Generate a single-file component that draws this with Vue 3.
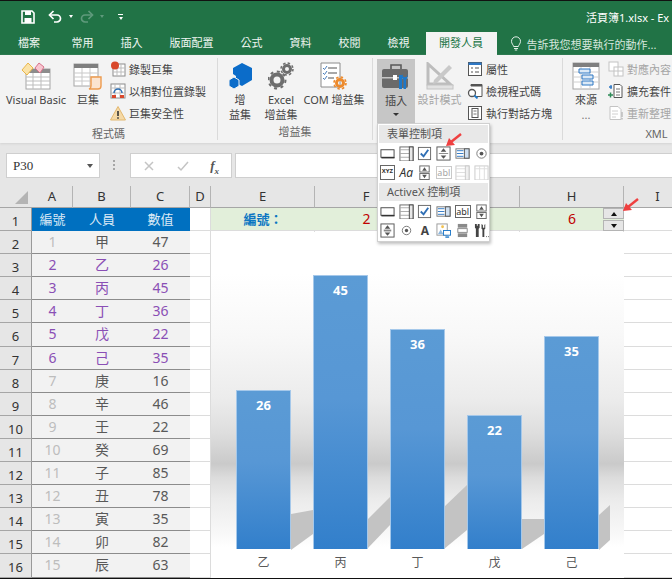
<script setup>
const tabs = ['常用', '插入', '版面配置', '公式', '資料', '校閱', '檢視']
const cols = ['A', 'B', 'C', 'D', 'E', 'F', 'G', 'H', 'I']
const rows = [
  [1, '甲', 47], [2, '乙', 26], [3, '丙', 45], [4, '丁', 36], [5, '戊', 22],
  [6, '己', 35], [7, '庚', 16], [8, '辛', 46], [9, '壬', 22], [10, '癸', 69],
  [11, '子', 85], [12, '丑', 78], [13, '寅', 35], [14, '卯', 82], [15, '辰', 63]
]
const bars = [
  { name: '乙', value: 26 },
  { name: '丙', value: 45 },
  { name: '丁', value: 36 },
  { name: '戊', value: 22 },
  { name: '己', value: 35 }
]
const isPicked = (n) => n >= 2 && n <= 6
const shadows = [
  '80,282 102,278 102,302 80,318',
  '156,288 179,265 179,293 156,317',
  '233,275 256,253 256,298 233,317',
  '311,287 333,287 333,302 311,317',
  '388,283 399,273 399,308 388,318'
]
</script>

<template>
  <div class="app">
    <!-- Title bar -->
    <div class="titlebar">
      <svg class="qa-save" viewBox="0 0 14 14" width="14" height="14">
        <path d="M1 1h10l2 2v10H1z" fill="none" stroke="#fff" stroke-width="1.6" />
        <rect x="4" y="1" width="6" height="4" fill="#fff" />
        <rect x="3.5" y="8" width="7" height="5" fill="#fff" />
      </svg>
      <svg class="qa-undo" viewBox="0 0 14 14" width="14" height="14">
        <path d="M2 5h7a3.5 3.5 0 0 1 0 7H6" fill="none" stroke="#fff" stroke-width="1.7" />
        <path d="M5.5 1 1.5 5l4 4" fill="none" stroke="#fff" stroke-width="1.7" />
      </svg>
      <span class="qa-caret"></span>
      <svg class="qa-redo" viewBox="0 0 14 14" width="14" height="14">
        <path d="M12 5H5a3.5 3.5 0 0 0 0 7h3" fill="none" stroke="#5f9a7c" stroke-width="1.7" />
        <path d="M8.5 1l4 4-4 4" fill="none" stroke="#5f9a7c" stroke-width="1.7" />
      </svg>
      <span class="qa-caret qa-caret--dim"></span>
      <span class="qa-custom"><i></i></span>
      <div class="title">活頁簿1.xlsx - Ex</div>
    </div>

    <!-- Tabs -->
    <div class="tabs">
      <div class="tab tab--file">檔案</div>
      <div v-for="t in tabs" :key="t" class="tab">{{ t }}</div>
      <div class="tab tab--active">開發人員</div>
      <div class="tell">
        <svg viewBox="0 0 12 15" width="12" height="15">
          <path d="M3.6 10.5C3.4 8.8 1.5 7.8 1.5 5.3a4.5 4.5 0 0 1 9 0c0 2.500-1.900 3.500-2.100 5.200z" fill="none" stroke="#e4efe9" />
          <path d="M4 12.500h4M4.800 14h2.400" stroke="#e4efe9" />
        </svg>
        <span>告訴我您想要執行的動作...</span>
      </div>
    </div>

    <!-- Ribbon -->
    <div class="ribbon">
      <section class="group group--code">
        <div class="group-body">
          <div class="big big--vb">
            <svg class="big-icon" viewBox="0 0 30 28" width="30" height="28">
              <rect x="5" y="7" width="24" height="20" fill="#fff" stroke="#a6a6a6" />
              <rect x="5" y="7" width="24" height="4" fill="#8c8c8c" />
              <path d="M5 15h24M5 19h24M5 23h24M12 11v16M20 11v16" stroke="#bdbdbd" />
              <path d="M1 8l6-7 5 5-6 7z" fill="#fbe3a8" stroke="#e9b64a" />
              <path d="M14 6l4-5 5 4-4 6z" fill="#f7c6d0" stroke="#d9718a" />
            </svg>
            <span>Visual Basic</span>
          </div>
          <div class="big big--macro">
            <svg class="big-icon" viewBox="0 0 30 28" width="30" height="28">
              <rect x="1" y="2" width="24" height="22" fill="#fff" stroke="#a6a6a6" />
              <rect x="1" y="2" width="24" height="4" fill="#7f7f7f" />
              <path d="M1 11h24M1 15h24M1 19h24M9 6v18M17 6v18" stroke="#c9c9c9" />
              <path d="M18 15h10v9a3 3 0 0 1-3 3H16a3 3 0 0 0 2-3z" fill="#fbe4d0" stroke="#ed9b4e" stroke-width="1.400" />
            </svg>
            <span>巨集</span>
          </div>
          <div class="small-col small-col--code">
            <div class="small">
              <svg viewBox="0 0 16 16" width="16" height="16">
                <rect x="3" y="3" width="12" height="12" fill="#fff" stroke="#8c8c8c" />
                <path d="M3 7h12M3 11h12M7 3v12M11 3v12" stroke="#bdbdbd" />
                <circle cx="5" cy="4.500" r="4" fill="#d9482b" />
              </svg>
              <span>錄製巨集</span>
            </div>
            <div class="small">
              <svg viewBox="0 0 16 16" width="16" height="16">
                <rect x="1" y="1" width="14" height="14" fill="#fff" stroke="#8c8c8c" />
                <path d="M1 5h14M1 10h14M5 1v14M10 1v14" stroke="#bdbdbd" />
                <path d="M4 10a4 4 0 0 1 8 0" fill="none" stroke="#2b6cb0" stroke-width="1.500" />
                <rect x="2" y="12" width="4" height="3" fill="#d9482b" />
                <rect x="10" y="12" width="4" height="3" fill="#d9482b" />
              </svg>
              <span>以相對位置錄製</span>
            </div>
            <div class="small">
              <svg viewBox="0 0 16 16" width="16" height="16">
                <path d="M8 1.500 15.500 15H.5z" fill="#f5d9a6" stroke="#e2b870" />
                <path d="M8 6v5M8 12.200v1.600" stroke="#333" stroke-width="1.600" />
              </svg>
              <span>巨集安全性</span>
            </div>
          </div>
        </div>
        <div class="group-label">程式碼</div>
      </section>

      <section class="group group--addin">
        <div class="group-body">
          <div class="big big--store">
            <svg class="big-icon" viewBox="0 0 26 28" width="26" height="28">
              <path d="M14 1l10 5v12l-10 6-6-3v-7l-3-2V6z" fill="#0b6cc9" />
              <path d="M6 15l5 3v6l-5 3-5-3v-6z" fill="#0b6cc9" stroke="#f3f3f3" />
            </svg>
            <span>增<br />益集</span>
          </div>
          <div class="big big--excel">
            <svg class="big-icon" viewBox="0 0 26 28" width="26" height="28">
              <circle cx="9" cy="18" r="5.500" fill="none" stroke="#6e6e6e" stroke-width="4" />
              <circle cx="9" cy="18" r="8.500" fill="none" stroke="#6e6e6e" stroke-width="2" stroke-dasharray="3 3.600" />
              <circle cx="19" cy="7" r="3.500" fill="none" stroke="#6e6e6e" stroke-width="3" />
              <circle cx="19" cy="7" r="6" fill="none" stroke="#6e6e6e" stroke-width="1.500" stroke-dasharray="2.500 2.200" />
            </svg>
            <span>Excel<br />增益集</span>
          </div>
          <div class="big big--com">
            <svg class="big-icon" viewBox="0 0 30 28" width="30" height="28">
              <path d="M2 1h19v24H2z" fill="#fff" stroke="#8c8c8c" />
              <path d="M9 6h9M9 11h9M9 16h6" stroke="#8c8c8c" stroke-width="1.400" />
              <path d="M4 6l1.500 1.500L8 4M4 11l1.500 1.500L8 9M4 16l1.500 1.500L8 14" fill="none" stroke="#4a7ebb" />
              <circle cx="21" cy="21" r="3.500" fill="none" stroke="#ed8a2c" stroke-width="3" />
              <circle cx="21" cy="21" r="6" fill="none" stroke="#ed8a2c" stroke-width="1.600" stroke-dasharray="2.500 2.200" />
            </svg>
            <span>COM 增益集</span>
          </div>
        </div>
        <div class="group-label">增益集</div>
      </section>

      <section class="group group--controls">
        <div class="group-body">
          <div class="big big--insert">
            <svg class="big-icon" viewBox="0 0 30 28" width="30" height="28">
              <path d="M10 6V2h10v4" fill="none" stroke="#5a5a5a" stroke-width="1.600" />
              <rect x="1" y="6" width="26" height="19" rx="2" fill="#6a6a6a" />
              <rect x="1" y="14" width="26" height="1.500" fill="#c6c6c6" />
              <rect x="12" y="12" width="4" height="5" fill="#fff" />
              <path d="M21 11v4l1.500 2v9h2.500v-9l1.500-2v-4l-1 3h-3z" fill="#1e78c8" />
              <path d="M18 12h3v14h-3z" fill="#1e78c8" />
            </svg>
            <span>插入</span>
            <i class="insert-caret"></i>
          </div>
          <div class="big big--design">
            <svg class="big-icon" viewBox="0 0 30 28" width="30" height="28">
              <path d="M3 2v20h22z" fill="none" stroke="#bdbdbd" stroke-width="3" />
              <path d="M9 18 24 3l3 3-15 15-4 1z" fill="#c9c9c9" />
              <rect x="2" y="23" width="26" height="4" fill="#e2e2e2" stroke="#c4c4c4" />
            </svg>
            <span>設計模式</span>
          </div>
          <div class="small-col small-col--controls">
            <div class="small">
              <svg viewBox="0 0 16 16" width="16" height="16">
                <rect x="1.500" y="1.500" width="13" height="13" fill="#fff" stroke="#555" />
                <rect x="1.500" y="1.500" width="13" height="2.500" fill="#2f78c4" />
                <path d="M4 7h2M8 7h4M4 11h2M8 11h4" stroke="#555" stroke-width="1.200" />
              </svg>
              <span>屬性</span>
            </div>
            <div class="small">
              <svg viewBox="0 0 16 16" width="16" height="16">
                <path d="M4 3V1.500h11v12H9" fill="#fff" stroke="#555" />
                <rect x="4" y="1.500" width="11" height="2" fill="#555" />
                <circle cx="5" cy="10" r="3.500" fill="#fff" stroke="#555" stroke-width="1.300" />
                <path d="M7.500 12.500 10.500 15.500" stroke="#1e78c8" stroke-width="1.800" />
              </svg>
              <span>檢視程式碼</span>
            </div>
            <div class="small">
              <svg viewBox="0 0 16 16" width="16" height="16">
                <rect x="1.500" y="1.500" width="13" height="13" fill="#fff" stroke="#555" />
                <rect x="5" y="3.500" width="6" height="9" fill="none" stroke="#555" />
                <path d="M6.500 6h3M6.500 9h3" stroke="#777" />
              </svg>
              <span>執行對話方塊</span>
            </div>
          </div>
        </div>
        <div class="group-label"></div>
      </section>

      <section class="group group--xml">
        <div class="group-body">
          <div class="big big--source">
            <svg class="big-icon" viewBox="0 0 28 28" width="28" height="28">
              <rect x="1" y="1" width="26" height="26" fill="#fff" stroke="#a6a6a6" />
              <rect x="1" y="1" width="26" height="4" fill="#7f7f7f" />
              <path d="M1 10h26M1 15h26M1 20h26M9 5v22M18 5v22" stroke="#d0d0d0" />
              <path d="M7 7h11v4H7zM10 13h11v4H10zM10 19h11v4H10z" fill="#dbe9f6" stroke="#2f78c4" />
            </svg>
            <span>來源</span>
            <span class="more">...</span>
          </div>
          <div class="small-col small-col--xml">
            <div class="small small--off">
              <svg viewBox="0 0 16 16" width="16" height="16">
                <rect x="1" y="1" width="9" height="9" fill="#fff" stroke="#c4c4c4" />
                <rect x="6" y="6" width="9" height="9" fill="#fff" stroke="#c4c4c4" />
                <path d="M6 10h9M10 6v9" stroke="#c4c4c4" />
              </svg>
              <span>對應內容</span>
            </div>
            <div class="small">
              <svg viewBox="0 0 16 16" width="16" height="16">
                <path d="M6 1.500h6l2 2v11H6z" fill="#fff" stroke="#555" />
                <path d="M8 6h4M8 9h4M8 12h4" stroke="#777" />
                <path d="M1 4h3M3 2v4" stroke="#2f78c4" stroke-width="1.300" />
                <path d="M0 12h5M2.500 9.500v5" stroke="#2e8b57" stroke-width="1.500" />
              </svg>
              <span>擴充套件</span>
            </div>
            <div class="small small--off">
              <svg viewBox="0 0 16 16" width="16" height="16">
                <path d="M2 1.500h8l3 3v10H2z" fill="#fff" stroke="#c4c4c4" />
                <path d="M4 6h6M4 9h6M4 12h4" stroke="#d0d0d0" />
                <path d="M14 7v5M14 13v1.500" stroke="#bdbdbd" stroke-width="1.500" />
              </svg>
              <span>重新整理</span>
            </div>
          </div>
        </div>
        <div class="group-label group-label--xml">XML</div>
      </section>
    </div>

    <!-- Formula bar -->
    <div class="formula">
      <div class="namebox">
        <span>P30</span>
        <i class="namebox-caret"></i>
      </div>
      <div class="grip"></div>
      <div class="fx-box">
        <svg viewBox="0 0 12 12" width="12" height="12"><path d="M2 2l8 8M10 2l-8 8" stroke="#c4c4c4" stroke-width="1.500" /></svg>
        <svg viewBox="0 0 12 12" width="12" height="12"><path d="M1 7l3 3 7-8" fill="none" stroke="#c4c4c4" stroke-width="1.500" /></svg>
        <span class="fx">f<sub>x</sub></span>
      </div>
      <div class="fx-input"></div>
    </div>

    <!-- Sheet -->
    <div class="sheet">
      <div class="corner"><i></i></div>
      <div v-for="c in cols" :key="c" class="col-head">{{ c }}</div>

      <div class="row-num">1</div>
      <div class="cell cell--head">編號</div>
      <div class="cell cell--head">人員</div>
      <div class="cell cell--head">數值</div>
      <div class="cell"></div>
      <div class="cell cell--band cell--caption">編號：</div>
      <div class="cell cell--band cell--num">2</div>
      <div class="cell cell--band"></div>
      <div class="cell cell--band cell--num">6</div>
      <div class="cell"></div>

      <template v-for="r in rows" :key="r[0]">
        <div class="row-num">{{ r[0] + 1 }}</div>
        <div :class="['cell', 'cell--data', isPicked(r[0]) ? 'is-picked' : 'is-faded']">{{ r[0] }}</div>
        <div :class="['cell', 'cell--data', { 'is-picked': isPicked(r[0]) }]">{{ r[1] }}</div>
        <div :class="['cell', 'cell--data', { 'is-picked': isPicked(r[0]) }]">{{ r[2] }}</div>
        <div v-for="n in 6" :key="n" class="cell"></div>
      </template>

      <!-- Spin button over H1 -->
      <div class="spin">
        <div class="spin-btn"><i class="tri tri--up"></i></div>
        <div class="spin-btn"><i class="tri tri--down"></i></div>
      </div>

      <!-- Chart floats over the cells -->
      <div class="chart">
        <svg class="chart-shadow" viewBox="0 0 413 346" width="413" height="346">
          <polygon v-for="p in shadows" :key="p" :points="p" fill="#c3c3c3" />
        </svg>
        <div class="bars">
          <div v-for="b in bars" :key="b.name" class="bar" :style="{ height: b.value * 6.1 + 'px' }">
            {{ b.value }}
          </div>
        </div>
        <div class="axis">
          <span v-for="b in bars" :key="b.name">{{ b.name }}</span>
        </div>
      </div>
    </div>

    <!-- Insert dropdown -->
    <div class="menu">
      <div class="menu-title">表單控制項</div>
      <div class="ctrl-grid">
        <svg viewBox="0 0 16 16"><rect x="1" y="4" width="14" height="8" fill="#fff" stroke="#444" /><path d="M1.500 12.500h14" stroke="#333" stroke-width="1.500" /></svg>
        <svg viewBox="0 0 16 16"><rect x="1" y="1" width="14" height="15" fill="#fff" stroke="#666" /><path d="M1 4h10M1 8h10M1 12h10" stroke="#aaa" /><rect x="11" y="1" width="4" height="15" fill="#e8e8e8" stroke="#444" /></svg>
        <svg viewBox="0 0 16 16"><rect x="1.500" y="1.500" width="13" height="13" fill="#fff" stroke="#666" /><path d="M4 8l3 3 5-7" fill="none" stroke="#2f6fb5" stroke-width="2" /></svg>
        <svg viewBox="0 0 16 16"><rect x="1" y="1" width="14" height="14" fill="#fff" stroke="#555" /><path d="M8 2.500 11 6H5zM8 13.500 5 10h6z" fill="#555" /><path d="M3 8h10" stroke="#888" /></svg>
        <svg viewBox="0 0 16 16"><rect x="1" y="3" width="14" height="10" fill="#fff" stroke="#777" /><path d="M2 5h7M2 8h7M2 11h7" stroke="#2f78c4" /><rect x="10" y="3" width="5" height="10" fill="#cfe0f2" stroke="#555" /></svg>
        <svg viewBox="0 0 16 16"><circle cx="8" cy="8" r="5" fill="#fff" stroke="#777" /><circle cx="8" cy="8" r="2" fill="#555" /></svg>

        <div class="ctrl-box"><b>XYZ</b></div>
        <span class="ctrl-aa">Aa</span>
        <svg viewBox="0 0 16 16"><rect x="3" y="1" width="10" height="6.500" fill="#fff" stroke="#666" /><rect x="3" y="9" width="10" height="6.500" fill="#fff" stroke="#666" /><path d="M8 2.500 10.500 6h-5zM8 14 5.500 10.500h5z" fill="#555" /></svg>
        <div class="ctrl-abl ctrl-abl--off">abl</div>
        <svg viewBox="0 0 16 16"><rect x="1" y="1" width="14" height="15" fill="#fff" stroke="#c9c9c9" /><path d="M1 4h10M1 8h10M1 12h10" stroke="#ddd" /><rect x="11" y="1" width="4" height="15" fill="#f0f0f0" stroke="#c9c9c9" /></svg>
        <svg viewBox="0 0 16 16"><rect x="1" y="1" width="14" height="15" fill="#fff" stroke="#c9c9c9" /><path d="M1 4h14M6 1v15M11 1v15" stroke="#ddd" /></svg>
      </div>
      <div class="menu-title">ActiveX 控制項</div>
      <div class="ctrl-grid">
        <svg viewBox="0 0 16 16"><rect x="1" y="4" width="14" height="8" fill="#fff" stroke="#444" /><path d="M1.500 12.500h14" stroke="#333" stroke-width="1.500" /></svg>
        <svg viewBox="0 0 16 16"><rect x="1" y="1" width="14" height="15" fill="#fff" stroke="#666" /><path d="M1 4h10M1 8h10M1 12h10" stroke="#aaa" /><rect x="11" y="1" width="4" height="15" fill="#e8e8e8" stroke="#444" /></svg>
        <svg viewBox="0 0 16 16"><rect x="1.500" y="1.500" width="13" height="13" fill="#fff" stroke="#666" /><path d="M4 8l3 3 5-7" fill="none" stroke="#2f6fb5" stroke-width="2" /></svg>
        <svg viewBox="0 0 16 16"><rect x="1" y="3" width="14" height="10" fill="#fff" stroke="#777" /><path d="M2 5h7M2 8h7M2 11h7" stroke="#2f78c4" /><rect x="10" y="3" width="5" height="10" fill="#cfe0f2" stroke="#555" /></svg>
        <div class="ctrl-abl">abl</div>
        <svg viewBox="0 0 16 16"><rect x="3" y="1" width="10" height="6.500" fill="#fff" stroke="#666" /><rect x="3" y="9" width="10" height="6.500" fill="#fff" stroke="#666" /><path d="M8 2.500 10.500 6h-5zM8 14 5.500 10.500h5z" fill="#555" /></svg>

        <svg viewBox="0 0 16 16"><rect x="1" y="1" width="14" height="14" fill="#fff" stroke="#555" /><path d="M8 2.500 11 6H5zM8 13.500 5 10h6z" fill="#555" /><rect x="4" y="7" width="8" height="2" fill="#888" /></svg>
        <svg viewBox="0 0 16 16"><circle cx="8" cy="8" r="4.500" fill="#fff" stroke="#777" /><circle cx="8" cy="8" r="1.800" fill="#555" /></svg>
        <span class="ctrl-a">A</span>
        <svg viewBox="0 0 16 16"><rect x="1" y="1" width="11" height="12" fill="#fff" stroke="#999" /><circle cx="7" cy="4" r="1.500" fill="#f2c14e" /><path d="M2 12l3-5 3 5z" fill="#8fb8de" /><rect x="8" y="8" width="7.500" height="5" fill="#fff" stroke="#1e78c8" /><path d="M10 15h4" stroke="#1e78c8" stroke-width="1.500" /></svg>
        <svg viewBox="0 0 16 16"><rect x="3" y="1" width="10" height="4" fill="#8a8a8a" /><rect x="3" y="6" width="10" height="4" fill="#fff" stroke="#888" /><rect x="3" y="11" width="10" height="4" fill="#8a8a8a" /></svg>
        <svg viewBox="0 0 16 16"><path d="M1 1h2v2h1V1h2v4l-1 1v9H2V6L1 5z" fill="#444" /><path d="M8 1l1.500 1v3H11V2l1-1v5l-1 1v8H9V7L8 6z" fill="#444" /><path d="M13 14.500h.8M15 14.500h.8" stroke="#444" /></svg>
      </div>
    </div>

    <!-- Callout arrows -->
    <svg class="callout callout--menu" viewBox="0 0 18 16" width="18" height="16">
      <path d="M16 1 6 9" stroke="#ef4040" stroke-width="2.500" />
      <path d="M1 13 4 5l6 7z" fill="#ef4040" />
    </svg>
    <svg class="callout callout--spin" viewBox="0 0 18 16" width="18" height="16">
      <path d="M16 1 6 9" stroke="#ef4040" stroke-width="2.500" />
      <path d="M1 13 4 5l6 7z" fill="#ef4040" />
    </svg>
  </div>
</template>

<style>
html,
body {
  margin: 0;
  background: #fff;
}
</style>

<style scoped>
.app {
  position: relative;
  width: 672px;
  height: 579px;
  overflow: hidden;
  box-sizing: border-box;
  border-top: 1px solid #111;
  border-bottom: 1px solid #111;
  background: #e6e6e6;
  color: #444;
  font-family: "Noto Sans", "Noto Sans CJK TC", sans-serif;
  font-size: 11px;
}

/* title bar */
.titlebar {
  display: flex;
  align-items: center;
  height: 31px;
  padding-left: 21px;
  background: #217346;
  color: #fff;
}
.qa-undo { margin-left: 13px; }
.qa-caret {
  width: 0;
  height: 0;
  margin-left: 7px;
  border: 2.500px solid transparent;
  border-top: 3px solid #fff;
  border-bottom: 0;
}
.qa-redo { margin-left: 7px; }
.qa-caret--dim { margin-left: 6px; border-top-color: #5f9a7c; }
.qa-custom {
  display: flex;
  flex-direction: column;
  align-items: center;
  width: 5px;
  margin-left: 14px;
  padding-top: 2px;
  border-top: 1px solid #fff;
}
.qa-custom i {
  border: 2.500px solid transparent;
  border-top: 3px solid #fff;
  border-bottom: 0;
}
.title {
  width: 86px;
  margin-left: auto;
  white-space: nowrap;
  font-size: 11px;
}

/* tabs */
.tabs {
  display: flex;
  height: 23px;
  padding-left: 4.500px;
  background: #217346;
  color: #f0f6f2;
}
.tab {
  padding: 0 13.500px;
  line-height: 22px;
  font-size: 11px;
}
.tab--file { margin-right: 4.500px; }
.tab--active {
  margin-left: 2.500px;
  padding: 0 13.500px;
  background: #f3f3f3;
  color: #217346;
}
.tell {
  display: flex;
  align-items: center;
  gap: 5px;
  margin-left: 13px;
  color: #d6e7dd;
  white-space: nowrap;
}

/* ribbon */
.ribbon {
  display: flex;
  height: 88px;
  background: #f3f3f3;
  box-shadow: 0 1px 2px #d4d4d4;
}
.group {
  display: flex;
  flex-direction: column;
  box-sizing: border-box;
  flex: none;
  height: 82px;
  margin-top: 3px;
  border-right: 1px solid #dadada;
}
.group--code { width: 218px; }
.group--addin { width: 155px; }
.group--controls { width: 190px; }
.group--xml { width: 109px; border-right: 0; }
.group-body {
  display: flex;
  flex: 1;
  align-items: flex-start;
}
.group-label {
  height: 20px;
  line-height: 20px;
  text-align: center;
  color: #666;
}
.group-label--xml { padding-left: 78px; white-space: nowrap; }

.big {
  display: flex;
  flex: none;
  flex-direction: column;
  align-items: center;
  text-align: center;
  line-height: 15px;
  color: #444;
  white-space: nowrap;
}
.big-icon { margin: 4px 0 2px; }
.big--vb { width: 62px; margin-left: 5px; }
.big--macro { width: 32px; margin-left: 5px; }
.big--store { width: 30px; margin-left: 7px; }
.big--store .big-icon { margin-left: 2px; }
.big--excel { width: 34px; margin-left: 9px; }
.big--com { width: 66px; margin-left: 3px; }
.big--insert {
  position: relative;
  width: 38px;
  height: 64px;
  margin-left: 4px;
  margin-top: 1px;
  background: #c6c6c6;
}
.insert-caret {
  margin-top: 5px;
  border: 3px solid transparent;
  border-top: 3px solid #333;
  border-bottom: 0;
}
.big--design { width: 45px; margin-left: 2px; color: #a6a6a6; }
.big--source { width: 30px; margin-left: 8px; }
.more { line-height: 15px; color: #777; }

.small-col {
  display: flex;
  flex: none;
  flex-direction: column;
}
.small-col--code { margin-left: 6px; }
.small-col--controls { margin-left: 5px; }
.small-col--xml { margin-left: 7px; }
.small {
  display: flex;
  align-items: center;
  gap: 3px;
  height: 22px;
  white-space: nowrap;
}
.small--off { color: #a6a6a6; }

/* formula bar */
.formula {
  display: flex;
  align-items: stretch;
  height: 25px;
  margin-top: 10px;
  padding-left: 6px;
}
.namebox {
  display: flex;
  align-items: center;
  justify-content: space-between;
  box-sizing: border-box;
  width: 94px;
  padding: 0 6px;
  border: 1px solid #cfcfcf;
  background: #fff;
  font-family: "Liberation Serif", serif;
  font-size: 13px;
  color: #333;
}
.namebox-caret {
  border: 3px solid transparent;
  border-top: 4px solid #555;
  border-bottom: 0;
}
.grip {
  width: 2px;
  height: 10px;
  margin: 7px 13px 0 13px;
  border-left: 2px dotted #a6a6a6;
}
.fx-box {
  display: flex;
  align-items: center;
  justify-content: space-between;
  box-sizing: border-box;
  width: 102px;
  padding: 0 12px 0 12px;
  border: 1px solid #cfcfcf;
  background: #fff;
}
.fx {
  font-family: "Liberation Serif", serif;
  font-size: 13px;
  font-style: italic;
  font-weight: 700;
  line-height: 1;
  color: #555;
}
.fx sub { font-size: 9px; line-height: 0; }
.fx-input {
  flex: 1;
  margin-left: 3px;
  border: 1px solid #cfcfcf;
  border-right: 0;
  background: #fff;
}

/* sheet */
.sheet {
  position: relative;
  display: grid;
  grid-template-columns: 32px 41px 58px 59px 21px 104px 103px 102px 104px 68px;
  grid-auto-rows: 23.1px;
  grid-template-rows: 22px;
  height: 392px;
  margin-top: 8px;
  background: #fff;
}
.corner {
  display: flex;
  align-items: flex-end;
  justify-content: flex-end;
  padding: 0 4px 3px 0;
  background: #e6e6e6;
  border-bottom: 1px solid #a6a6a6;
}
.corner i {
  width: 0;
  height: 0;
  border-left: 13px solid transparent;
  border-bottom: 13px solid #b4b4b4;
}
.col-head {
  box-sizing: border-box;
  border-right: 1px solid #b4b4b4;
  border-bottom: 1px solid #a6a6a6;
  background: #e6e6e6;
  font-size: 13px;
  line-height: 21px;
  text-align: center;
  color: #333;
}
.col-head:last-of-type { border-right: 0; }
.row-num {
  box-sizing: border-box;
  padding-top: 3px;
  border-right: 1px solid #9a9a9a;
  border-bottom: 1px solid #a6a6a6;
  background: #e6e6e6;
  font-size: 13px;
  line-height: 20px;
  text-align: center;
  color: #333;
}
.cell {
  box-sizing: border-box;
  border-right: 1px solid #dcdcdc;
  border-bottom: 1px solid #dcdcdc;
  background: #fff;
  line-height: 22px;
  text-align: center;
  font-size: 14px;
  color: #595959;
}
.cell--head {
  border: 0;
  background: #0070c0;
  color: #dbeaf6;
  font-size: 13px;
}
.cell--band {
  border-right: 0;
  background: #e2efda;
}
.cell--caption {
  padding-right: 0;
  font-size: 13px;
  font-weight: 700;
  color: #0b76c2;
}
.cell--num {
  font-size: 14px;
  color: #c00000;
}
.cell--data {
  border-right: 0;
  border-bottom: 1px solid #8c8c8c;
  background: #f2f2f2;
  font-size: 14px;
}
.is-picked { color: #8a4fb5; }
.is-faded { color: #bdbdbd; }

.spin {
  position: absolute;
  top: 22px;
  left: 603px;
  display: flex;
  flex-direction: column;
  gap: 1px;
  width: 21px;
}
.spin-btn {
  display: flex;
  align-items: center;
  justify-content: center;
  box-sizing: border-box;
  height: 11px;
  border: 1px solid #b4b4b4;
  background: #e6e6e6;
}
.tri { border: 3.500px solid transparent; }
.tri--up { border-top: 0; border-bottom: 4px solid #111; }
.tri--down { border-bottom: 0; border-top: 4px solid #111; }

/* chart */
.chart {
  position: absolute;
  top: 46px;
  left: 211px;
  display: flex;
  flex-direction: column;
  box-sizing: border-box;
  width: 413px;
  height: 346px;
  background: linear-gradient(
    #fff 0,
    #fff 12%,
    #f8f8f8 30%,
    #ececec 48%,
    #dedede 58%,
    #cacaca 67%,
    #dcdcdc 71%,
    #ebebeb 77%,
    #f8f8f8 87%,
    #fff 91%
  );
}
.chart-shadow {
  position: absolute;
  top: 0;
  left: 0;
}
.bars {
  position: relative;
  display: flex;
  flex: none;
  align-items: flex-end;
  gap: 22px;
  height: 317px;
  padding-left: 25px;
}
.bar {
  flex: none;
  box-sizing: border-box;
  width: 55px;
  padding-top: 5px;
  border: 1px solid #a5c8ea;
  border-bottom: 0;
  background: linear-gradient(#5b9bd5, #5797d5 45%, #327fcb);
  color: #fff;
  font-size: 13px;
  font-weight: 700;
  line-height: 18px;
  text-align: center;
}
.axis {
  display: flex;
  gap: 22px;
  padding-left: 25px;
  margin-top: 5px;
  color: #595959;
  font-size: 12px;
  line-height: 18px;
}
.axis span {
  width: 55px;
  text-align: center;
}

/* insert dropdown */
.menu {
  position: absolute;
  top: 122px;
  left: 377px;
  box-sizing: border-box;
  width: 113px;
  height: 119px;
  padding: 1px 1px 0;
  background: #fff;
  border: 1px solid #d0d0d0;
  box-shadow: 1px 2px 3px rgba(0, 0, 0, 0.25);
}
.menu-title {
  height: 18px;
  padding-left: 8px;
  background: #e8e8e8;
  font-size: 11px;
  line-height: 18px;
  color: #555;
}
.ctrl-grid {
  display: grid;
  grid-template-columns: repeat(6, 18.800px);
  grid-auto-rows: 19px;
  align-items: center;
  justify-items: center;
  height: 40px;
  margin-left: -1px;
  padding: 1px 0 0;
  box-sizing: border-box;
}
.ctrl-grid svg {
  width: 15px;
  height: 15px;
}
.ctrl-box {
  box-sizing: border-box;
  width: 15px;
  height: 15px;
  border: 1px solid #666;
  text-align: center;
  line-height: 6px;
}
.ctrl-box b {
  font-size: 6px;
  color: #333;
}
.ctrl-aa {
  font-size: 12px;
  font-style: italic;
  color: #333;
}
.ctrl-abl {
  box-sizing: border-box;
  width: 16px;
  height: 13px;
  border: 1px solid #666;
  font-size: 9px;
  line-height: 11px;
  text-align: center;
  color: #333;
}
.ctrl-abl--off {
  border-color: #c9c9c9;
  color: #a6a6a6;
}
.ctrl-a {
  font-size: 12px;
  font-weight: 700;
  color: #444;
}

/* red arrows */
.callout {
  position: absolute;
}
.callout--menu {
  top: 132px;
  left: 445px;
}
.callout--spin {
  top: 197px;
  left: 622px;
}
</style>
